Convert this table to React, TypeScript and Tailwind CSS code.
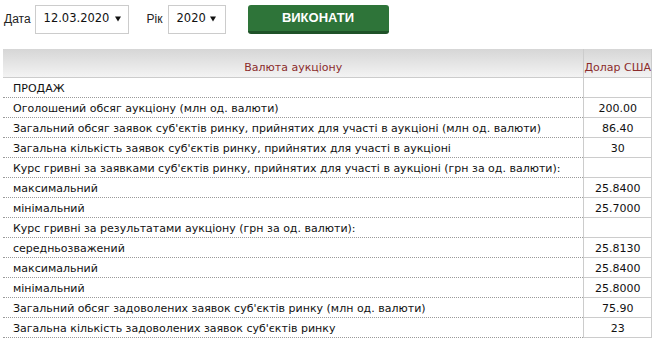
import React from "react";

const rows: [string, string][] = [
  ["ПРОДАЖ", ""],
  ["Оголошений обсяг аукціону (млн од. валюти)", "200.00"],
  ["Загальний обсяг заявок суб'єктів ринку, прийнятих для участі в аукціоні (млн од. валюти)", "86.40"],
  ["Загальна кількість заявок суб'єктів ринку, прийнятих для участі в аукціоні", "30"],
  ["Курс гривні за заявками суб'єктів ринку, прийнятих для участі в аукціоні (грн за од. валюти):", ""],
  ["максимальний", "25.8400"],
  ["мінімальний", "25.7000"],
  ["Курс гривні за результатами аукціону (грн за од. валюти):", ""],
  ["середньозважений", "25.8130"],
  ["максимальний", "25.8400"],
  ["мінімальний", "25.8000"],
  ["Загальний обсяг задоволених заявок суб'єктів ринку (млн од. валюти)", "75.90"],
  ["Загальна кількість задоволених заявок суб'єктів ринку", "23"],
];

function Arrow() {
  return (
    <svg width="6" height="6" viewBox="0 0 6 6" className="shrink-0">
      <path d="M0 0.5 H6 L3 5.5 Z" fill="#111" />
    </svg>
  );
}

export default function App() {
  return (
    <div className="w-[655px] h-[345px] overflow-hidden bg-white text-black">
      <div className="flex items-center h-[37px] pl-[4px] pt-[1px]">
        <span className="font-['Liberation_Sans',Arial,sans-serif] text-[12px] text-[#222]">Дата</span>
        <div className="ml-[4px] w-[94px] h-[29px] border border-[#cccccc] bg-white flex items-center pl-[8px] pr-[7px] justify-between font-['DejaVu_Sans',sans-serif] text-[11.5px] text-[#111]">
          <span>12.03.2020</span>
          <Arrow />
        </div>
        <span className="ml-[18px] font-['Liberation_Sans',Arial,sans-serif] text-[12px] text-[#222]">Рік</span>
        <div className="ml-[5px] w-[58px] h-[29px] border border-[#cccccc] bg-white flex items-center pl-[8px] pr-[9px] justify-between font-['DejaVu_Sans',sans-serif] text-[11.5px] text-[#111]">
          <span>2020</span>
          <Arrow />
        </div>
        <div className="ml-[22px] w-[141px] h-[29px] rounded-[3px] bg-[#2e7439] border-b-[3px] border-[#1f5228] flex items-center justify-center font-['Liberation_Sans',Arial,sans-serif] font-bold text-[13px] text-white">
          ВИКОНАТИ
        </div>
      </div>
      <div className="pl-[3px] pt-[12px]">
        <table className="w-[649px] border-collapse font-['DejaVu_Sans',sans-serif] text-[11px] text-[#111]">
          <thead>
            <tr className="h-[28px] bg-gradient-to-b from-[#d6d6d6] to-[#f3f3f3]">
              <th className="p-0 font-normal text-[#8b2c2c] align-bottom pb-[3px] leading-[13px] border-b border-[#cccccc]">Валюта аукціону</th>
              <th className="p-0 w-[65px] font-normal text-[#8b2c2c] align-bottom pb-[3px] leading-[13px] border-b border-l border-r border-[#cccccc] whitespace-nowrap">Долар США</th>
            </tr>
          </thead>
          <tbody>
            {rows.map(([label, value], i) => (
              <tr key={i} className="h-[20px]">
                <td className="p-0 pl-[10px] pt-[4px] align-top leading-[13px] border-b border-dotted border-[#9a9a9a] whitespace-nowrap">{label}</td>
                <td className="p-0 pt-[4px] align-top leading-[13px] text-center border-b border-l border-r border-[#cccccc]">{value}</td>
              </tr>
            ))}
          </tbody>
        </table>
      </div>
    </div>
  );
}
